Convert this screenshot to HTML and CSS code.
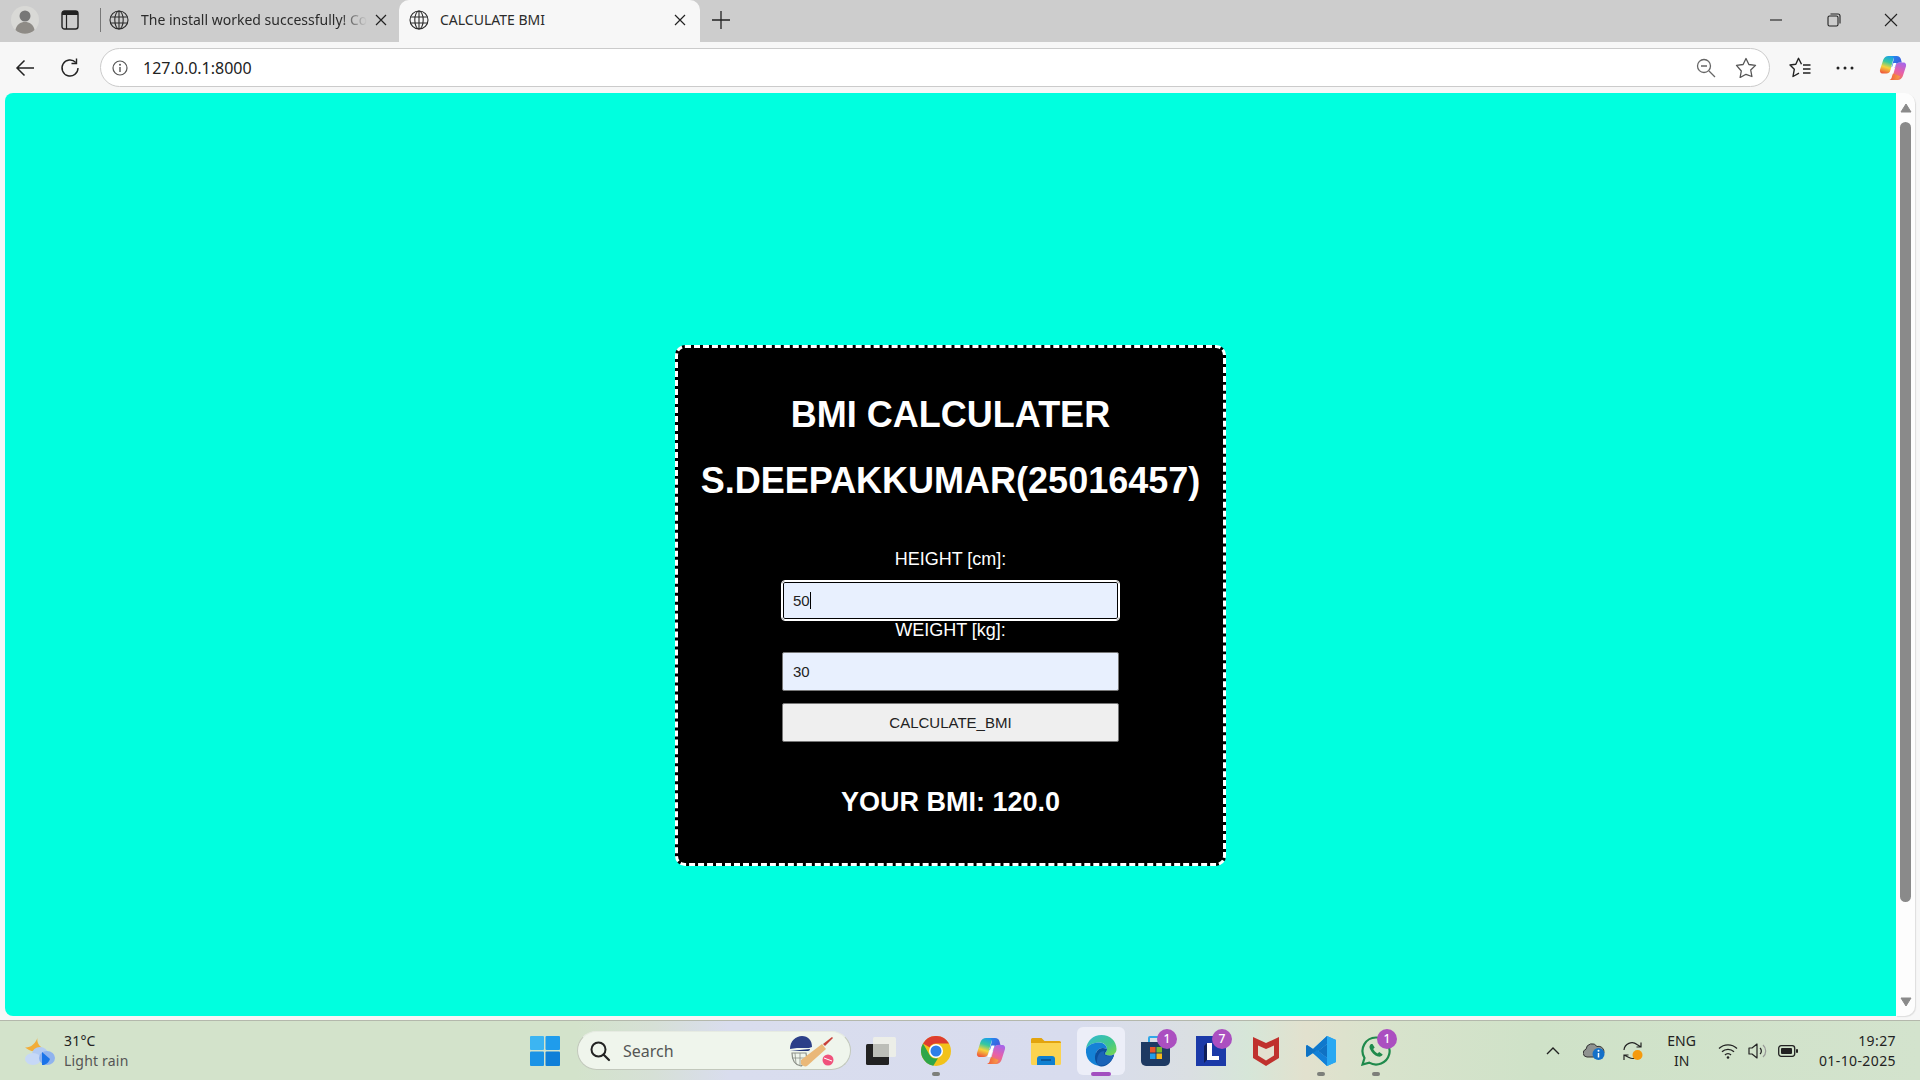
FILE: index.html
```html
<!DOCTYPE html>
<html lang="en">
<head>
<meta charset="utf-8">
<title>CALCULATE BMI</title>
<link rel="stylesheet" href="styles.css">
</head>
<body>
<svg class="defs" width="0" height="0" aria-hidden="true">
  <defs>
    <symbol id="globe" viewBox="0 0 20 20"><g fill="none" stroke="#2b2b2b" stroke-width="1.1"><circle cx="10" cy="10" r="9"/><ellipse cx="10" cy="10" rx="4.2" ry="9"/><path d="M1.5 7h17M1.5 13h17M10 1v18"/></g></symbol>
    <symbol id="close" viewBox="0 0 12 12"><path d="M1 1l10 10M11 1L1 11" fill="none" stroke="#222" stroke-width="1.2"/></symbol>
    <linearGradient id="cpL" x1=".6" y1="0" x2=".3" y2="1"><stop offset="0" stop-color="#1a9fe8"/><stop offset=".35" stop-color="#35c9a0"/><stop offset=".65" stop-color="#f5d33c"/><stop offset="1" stop-color="#ef5a3c"/></linearGradient>
    <linearGradient id="cpR" x1=".7" y1="0" x2=".3" y2="1"><stop offset="0" stop-color="#a866e8"/><stop offset=".5" stop-color="#e860a8"/><stop offset="1" stop-color="#f4823a"/></linearGradient>
    <linearGradient id="cpT" x1="0" y1="0" x2="1" y2="1"><stop offset="0" stop-color="#1f8ff0"/><stop offset=".6" stop-color="#3a62e0"/><stop offset="1" stop-color="#a866e8"/></linearGradient>
    <linearGradient id="cpB" x1="0" y1="0" x2="1" y2="0"><stop offset="0" stop-color="#ef5a3c"/><stop offset="1" stop-color="#f7a04a"/></linearGradient>
    <symbol id="copilot" viewBox="0 0 30 28">
      <path d="M10 1h9c-2 0-3 1-3.500 3L12 17c-.5 2-2 3-4 3H3.500C1.500 20 .5 18 1 16L4.500 5C5.500 2.500 7.500 1 10 1z" fill="url(#cpL)"/>
      <path d="M20 27h-9c2 0 3-1 3.500-3L18 11c.5-2 2-3 4-3h4.500c2 0 3 2 2.500 4l-3.500 11c-1 2.500-3 4-5.500 4z" fill="url(#cpR)"/>
      <path d="M14 1h5c2.500 0 4 1.500 4.500 3.500L24.500 8H22c-2 0-3.500 1-4 3l-1 3-3.500-1L15.500 6C16 3.500 15.500 2 14 1z" fill="url(#cpT)"/>
      <path d="M11 27h6c2 0 4-1 5-3l.5-1-7.500-3-1 2.500C13.500 25.500 12.500 26.500 11 27z" fill="url(#cpB)"/>
      <path d="M15.500 8.500h3.200L14.500 20h-3.200z" fill="#fff"/>
    </symbol>
  </defs>
</svg>

<div class="window">
  <header class="tabstrip">
    <div class="avatar">
      <svg width="28" height="28" viewBox="0 0 28 28"><circle cx="14" cy="14" r="14" fill="#d9d9d6"/><circle cx="14" cy="10" r="5.500" fill="#777"/><path d="M4.500 24c1-5.500 5-8 9.500-8s8.500 2.500 9.500 8a14 14 0 0 1-19 0z" fill="#8e8b86"/></svg>
    </div>
    <div class="tabs-btn">
      <svg width="18" height="20" viewBox="0 0 18 20"><rect x="1" y="1" width="16" height="18" rx="2.500" fill="none" stroke="#222" stroke-width="1.400"/><path d="M1 2.500A1.500 1.500 0 0 1 2.500 1h13A1.500 1.500 0 0 1 17 2.500V5H1z" fill="#222"/><path d="M5.500 5v14" stroke="#222" stroke-width="1.200"/></svg>
    </div>
    <div class="tab-sep"></div>
    <div class="tab tab-idle">
      <svg class="favicon" width="20" height="20"><use href="#globe"/></svg>
      <span class="tab-title tab-fade">The install worked successfully! Co</span>
      <svg class="tab-close" width="12" height="12"><use href="#close"/></svg>
    </div>
    <div class="tab tab-active">
      <svg class="favicon" width="20" height="20"><use href="#globe"/></svg>
      <span class="tab-title">CALCULATE BMI</span>
      <svg class="tab-close" width="12" height="12"><use href="#close"/></svg>
    </div>
    <div class="new-tab">
      <svg width="18" height="18" viewBox="0 0 18 18"><path d="M9 0v18M0 9h18" stroke="#222" stroke-width="1.300"/></svg>
    </div>
    <div class="win-controls">
      <svg width="14" height="14" viewBox="0 0 14 14"><path d="M1 7h12" stroke="#222" stroke-width="1.100"/></svg>
      <svg width="14" height="14" viewBox="0 0 14 14"><rect x="1" y="3" width="10" height="10" rx="1.500" fill="none" stroke="#222" stroke-width="1.100"/><path d="M3.500 1h7.500A2 2 0 0 1 13 3v7.500" fill="none" stroke="#222" stroke-width="1.100"/></svg>
      <svg width="14" height="14" viewBox="0 0 14 14"><path d="M1 1l12 12M13 1L1 13" stroke="#222" stroke-width="1.100"/></svg>
    </div>
  </header>

  <nav class="toolbar">
    <svg class="tool-back" width="20" height="18" viewBox="0 0 20 18"><path d="M19 9H2M9.500 1.500L2 9l7.500 7.500" fill="none" stroke="#222" stroke-width="1.500"/></svg>
    <svg class="tool-reload" width="20" height="20" viewBox="0 0 20 20"><path d="M15.800 4.500A8 8 0 1 0 18 10" fill="none" stroke="#222" stroke-width="1.400"/><path d="M16.500 .5v5h-5" fill="none" stroke="#222" stroke-width="1.400"/></svg>
    <div class="omnibox">
      <svg class="omni-info" width="16" height="16" viewBox="0 0 16 16"><circle cx="8" cy="8" r="7" fill="none" stroke="#555" stroke-width="1.200"/><path d="M8 7v5" stroke="#555" stroke-width="1.400"/><circle cx="8" cy="4.700" r="1" fill="#555"/></svg>
      <span class="omni-url">127.0.0.1:8000</span>
      <svg class="omni-zoom" width="20" height="20" viewBox="0 0 20 20"><circle cx="8" cy="8" r="6.500" fill="none" stroke="#666" stroke-width="1.300"/><path d="M5 8h6M13 13l6 6" stroke="#666" stroke-width="1.300"/></svg>
      <svg class="omni-star" width="22" height="21" viewBox="0 0 22 21"><path d="M11 1.500l2.900 6 6.600.9-4.800 4.600 1.200 6.500L11 17.300l-5.900 3.200 1.200-6.500L1.500 8.400l6.600-.9z" fill="none" stroke="#555" stroke-width="1.300" stroke-linejoin="round"/></svg>
    </div>
    <svg class="tool-favs" width="22" height="21" viewBox="0 0 22 21"><path d="M12.500 7.300L9.500 1.300 6.800 7.300 1 8l4.300 4.300L4 19.500l6-3.300" fill="none" stroke="#222" stroke-width="1.400" stroke-linejoin="round"/><path d="M14 8h7.500M14 12h7.500M14 16h7.500" stroke="#222" stroke-width="1.300"/></svg>
    <svg class="tool-dots" width="18" height="4" viewBox="0 0 18 4"><circle cx="2" cy="2" r="1.500" fill="#222"/><circle cx="9" cy="2" r="1.500" fill="#222"/><circle cx="16" cy="2" r="1.500" fill="#222"/></svg>
    <svg class="tool-copilot" width="28" height="26"><use href="#copilot"/></svg>
  </nav>

  <main class="viewport">
    <div class="page">
      <section class="card">
        <h1 class="card-title">BMI CALCULATER</h1>
        <h1 class="card-title card-title-2">S.DEEPAKKUMAR(25016457)</h1>
        <form class="bmi-form">
          <label class="field-label" for="h">HEIGHT [cm]:</label>
          <div class="field field-focus" id="h"><span class="field-text">50</span><span class="caret"></span></div>
          <label class="field-label" for="w">WEIGHT [kg]:</label>
          <div class="field" id="w"><span class="field-text">30</span></div>
          <div class="calc-btn">CALCULATE_BMI</div>
        </form>
        <h2 class="result">YOUR BMI: 120.0</h2>
      </section>
    </div>
    <div class="scrollbar">
      <svg width="12" height="10" viewBox="0 0 12 10"><path d="M6 1l5 8H1z" fill="#8a8a8a" stroke="#8a8a8a" stroke-linejoin="round"/></svg>
      <div class="thumb"></div>
      <svg width="12" height="10" viewBox="0 0 12 10"><path d="M6 9L1 1h10z" fill="#8a8a8a" stroke="#8a8a8a" stroke-linejoin="round"/></svg>
    </div>
  </main>

  <footer class="taskbar">
    <div class="weather">
      <svg width="30" height="30" viewBox="0 0 30 30">
        <path d="M13 0c-1.500 3.500-.5 8 2.500 10.500 1 .8 1.500 1 .5 2-3 3-8 3.500-12 1.500l-4-2.500C5 12 11 8 13 0z" fill="#f2ad3a"/>
        <ellipse cx="15" cy="18" rx="8" ry="7" fill="#b3cbf3"/>
        <ellipse cx="8" cy="23" rx="8" ry="6" fill="#c6d8f6"/>
        <ellipse cx="22" cy="22" rx="8" ry="7" fill="#8fb3ee"/>
        <path d="M17 16l8 7c-1 3-3 5-6 6h-2z" fill="#1a73e8"/>
      </svg>
      <div class="weather-text"><span class="w-temp">31°C</span><span class="w-desc">Light rain</span></div>
    </div>

    <div class="win-logo">
      <svg width="30" height="30" viewBox="0 0 30 30"><rect x="0" y="0" width="14" height="14" rx="1" fill="#3cb5f2"/><rect x="15.500" y="0" width="14.500" height="14" rx="1" fill="#1f9cec"/><rect x="0" y="15.500" width="14" height="14.500" rx="1" fill="#1a93e6"/><rect x="15.500" y="15.500" width="14.500" height="14.500" rx="1" fill="#0f7fd8"/></svg>
    </div>

    <div class="searchbox">
      <svg width="22" height="22" viewBox="0 0 22 22"><circle cx="9.500" cy="9.500" r="7" fill="none" stroke="#222" stroke-width="2"/><path d="M14.500 14.500L20 20" stroke="#222" stroke-width="2.200" stroke-linecap="round"/></svg>
      <span class="search-text">Search</span>
      <svg class="search-art" width="50" height="34" viewBox="0 0 50 34">
        <path d="M3 15c0-8 6-13 12-13s10 4 10 11l-3 1H10z" fill="#2b3f88"/>
        <path d="M3 17l20-2c0 1-1 2-2 2H5z" fill="#22337a"/>
        <path d="M5 19h14l1 8-6 5c-6-1-9-6-9-13z" fill="none" stroke="#8c9088" stroke-width="1.200"/>
        <path d="M8 19l1 11M13 19v12M5 24h15" stroke="#8c9088" stroke-width=".8"/>
        <path d="M14 26l21-16 4 5-19 17c-2 1-4 0-6-2z" fill="#eab878"/>
        <path d="M36 10l9-7 1 1-8 8z" fill="#c8413a"/>
        <circle cx="41" cy="26" r="5.500" fill="#f0527c"/>
        <path d="M37 24l8 3" stroke="#fff" stroke-width="1"/>
      </svg>
    </div>

    <div class="apps">
      <div class="app">
        <svg width="30" height="28" viewBox="0 0 30 28"><rect x="7" y="0" width="23" height="20" rx="1.500" fill="#eceee8"/><rect x="0" y="7" width="23" height="21" rx="1.500" fill="#222"/><rect x="7" y="7" width="16" height="13" fill="#bcbeb8"/></svg>
      </div>
      <div class="app app-run">
        <svg width="30" height="30" viewBox="0 0 30 30"><circle cx="15" cy="15" r="15" fill="#f2c21a"/><path d="M2 7.500A15 15 0 0 1 28 7.500H15a7.500 7.500 0 0 0-6.500 3.700z" fill="#de3d30"/><path d="M2 7.500l6.500 11.200A7.500 7.500 0 0 0 17 22.200l-4.700 7.600A15 15 0 0 1 2 7.500z" fill="#2ea64a"/><circle cx="15" cy="15" r="7" fill="#fff"/><circle cx="15" cy="15" r="5.500" fill="#2f7fe8"/></svg>
      </div>
      <div class="app">
        <svg width="30" height="28"><use href="#copilot"/></svg>
      </div>
      <div class="app">
        <svg width="30" height="28" viewBox="0 0 30 28"><path d="M0 2.500A1.500 1.500 0 0 1 1.500 1h9l3 3h15A1.500 1.500 0 0 1 30 5.500V12H0z" fill="#e3a40e"/><path d="M0 6h30v20.500a1.500 1.500 0 0 1-1.500 1.500h-27A1.500 1.500 0 0 1 0 26.500z" fill="#fbd350"/><path d="M6 28v-6a3 3 0 0 1 3-3h12a3 3 0 0 1 3 3v6z" fill="#0f7fd0"/><path d="M10 23h10" stroke="#0b4d8a" stroke-width="1.500"/></svg>
      </div>
      <div class="app app-active">
        <svg width="32" height="32" viewBox="0 0 32 32"><path d="M1 14C2 6 8 0 16.500 0 25 0 31.500 6 31.500 14c0 4-3 6.500-7 6.500-3 0-4.500-1-4.500-2 0-1 2-1.500 2-4.500 0-3.500-3-6.500-7-6.500C8 7.500 3 10 1 14z" fill="url(#edge1)"/><path d="M1 14c2-4 7-6.500 13.500-6.500 4 0 7.500 3 7.500 6.500-4-2-9-1-10.500 3-1.500 5 1 11 6.500 13.500C8 32 0 25 1 14z" fill="#1582d6"/><path d="M11.500 17c1.500-4 6.500-5 10.500-3 0 3-2 3.500-2 4.500s1.500 2 4.500 2c1.800 0 3.500-.5 4.800-1.500C28 26 22 32 16 31.500c-1 0-1.700-.4-2.500-1C9.500 27 9 21 11.500 17z" fill="#0c4f9e"/><path d="M14 19c1-2 3-3 5.500-3-1 1.500-.5 3.500 1 4.500 2 1 6 1 8.500-.5-2 6-7 10.500-13 10.500-3 0-4.500-2-4-5 .2-2.500.7-4.500 2-6.500z" fill="#1a63b8"/><defs><linearGradient id="edge1" x1="0" y1="0" x2="1" y2="1"><stop offset="0" stop-color="#2fb7d8"/><stop offset=".6" stop-color="#41c88a"/><stop offset="1" stop-color="#7fd84a"/></linearGradient></defs></svg>
        <i class="run-bar"></i>
      </div>
      <div class="app">
        <svg width="30" height="30" viewBox="0 0 30 30"><path d="M8 7V2a1 1 0 0 1 1-1h10" fill="none" stroke="#30a8e8" stroke-width="2"/><path d="M0 6h29v19a5 5 0 0 1-5 5H5a5 5 0 0 1-5-5z" fill="#1e3a63"/><rect x="9" y="11" width="5.500" height="5.500" fill="#e8562a"/><rect x="15.500" y="11" width="5.500" height="5.500" fill="#7ab82c"/><rect x="9" y="17.500" width="5.500" height="5.500" fill="#1f9ce8"/><rect x="15.500" y="17.500" width="5.500" height="5.500" fill="#f5b91a"/></svg>
        <b class="badge">1</b>
      </div>
      <div class="app">
        <svg width="30" height="30" viewBox="0 0 30 30"><rect width="30" height="30" fill="#1b3aa8"/><path d="M11 7h5v13h7v4H11z" fill="#fff"/><path d="M8 10l3-3v17l-3 3z" fill="#0f1f5a"/></svg>
        <b class="badge">7</b>
      </div>
      <div class="app">
        <svg width="26" height="30" viewBox="0 0 26 30"><path d="M0 1l13 6 13-6v21l-13 8-13-8z" fill="#c0312d"/><path d="M5 9.500l8 3.500 8-3.500v10l-8 5-8-5z" fill="#e3e0cf"/></svg>
      </div>
      <div class="app app-run">
        <svg width="30" height="30" viewBox="0 0 30 30"><path d="M21 0l9 4v22l-9 4-14-13-6 4-1-1V10l1-1 6 4z" fill="#1f9cec"/><path d="M21 8L12 15l9 7z" fill="#e0e4dc"/><path d="M21 0l9 4v22l-9 4z" fill="#29a8f2"/><path d="M21 8v14l-9-7zM7 13l-6-4-1 1v10l1 1 6-4 5 4-1-7z" fill="#0f72c4"/><path d="M21 0L7 13l4 3 10-8z" fill="#0f78cc"/><path d="M21 30L7 17l4-3 10 8z" fill="#1280d8"/></svg>
      </div>
      <div class="app app-run">
        <svg width="30" height="30" viewBox="0 0 30 30"><path d="M15 1.500a13.500 13.500 0 0 0-11.500 20.500L1.500 28.500l6.700-1.900A13.500 13.500 0 1 0 15 1.500z" fill="none" stroke="#1f8a4c" stroke-width="2.200"/><path d="M10 8c-1.500 1-2 3-1 5 1.500 3.500 4.500 6.500 8 7.500 2 .5 3.800-.2 4.700-2l-3.500-2.500-1.700 1.500c-2-1-3.400-2.500-4.300-4.400l1.500-1.700L11.500 8z" fill="#1f8a4c"/></svg>
        <b class="badge">1</b>
      </div>
    </div>

    <div class="tray">
      <svg class="t-chev" width="14" height="8" viewBox="0 0 14 8"><path d="M1 7l6-6 6 6" fill="none" stroke="#222" stroke-width="1.400"/></svg>
      <svg class="t-cloud" width="22" height="20" viewBox="0 0 22 20"><path d="M4 16a4 4 0 0 1-1-7.800A6 6 0 0 1 14 5.500 5 5 0 0 1 17 16z" fill="#8f9290" stroke="#333" stroke-width="1"/><circle cx="15.500" cy="13" r="6" fill="#1470c8"/><path d="M15.500 12v4.500" stroke="#fff" stroke-width="1.500"/><circle cx="15.500" cy="9.800" r="1" fill="#fff"/></svg>
      <svg class="t-sync" width="22" height="20" viewBox="0 0 22 20"><path d="M2 9a8 8 0 0 1 13-5.500L19 6M19 1.500V6h-4.500" fill="none" stroke="#222" stroke-width="1.200"/><path d="M18 13a8 8 0 0 1-11 3.500L2 14M2 19v-5h4.500" fill="none" stroke="#222" stroke-width="1.200"/><circle cx="15.500" cy="14" r="5" fill="#f59a0e"/></svg>
      <div class="t-lang"><span>ENG</span><span>IN</span></div>
      <svg class="t-wifi" width="20" height="16" viewBox="0 0 20 16"><path d="M1 5.500a13 13 0 0 1 18 0M4 8.800a8.500 8.500 0 0 1 12 0M7 12a4 4 0 0 1 6 0" fill="none" stroke="#222" stroke-width="1.300"/><circle cx="10" cy="14.500" r="1.300" fill="#222"/></svg>
      <svg class="t-vol" width="20" height="18" viewBox="0 0 20 18"><path d="M1 6h3l5-4v14l-5-4H1z" fill="none" stroke="#222" stroke-width="1.200" stroke-linejoin="round"/><path d="M12 6a4 4 0 0 1 0 6" fill="none" stroke="#222" stroke-width="1.200"/><path d="M15 3a8 8 0 0 1 0 12" fill="none" stroke="#999" stroke-width="1.200"/></svg>
      <svg class="t-bat" width="20" height="12" viewBox="0 0 20 12"><rect x=".7" y=".7" width="16" height="10.600" rx="2.500" fill="none" stroke="#222" stroke-width="1.300"/><rect x="3" y="3" width="11" height="6" rx="1" fill="#222"/><rect x="18" y="4" width="2" height="4" rx="1" fill="#222"/></svg>
      <div class="t-clock"><span>19:27</span><span>01-10-2025</span></div>
    </div>
  </footer>
</div>
</body>
</html>
```
FILE: styles.css
```css
* { box-sizing: border-box; }
html, body { margin: 0; height: 100%; overflow: hidden; }
body { font-family: "Noto Sans", "Open Sans", sans-serif; color: #222; }
.defs { position: absolute; }
.window { width: 1920px; height: 1080px; display: flex; flex-direction: column; background: #f7f7f7; }

/* tab strip */
.tabstrip { height: 42px; background: #cdcdcd; display: flex; align-items: center; padding: 0 0 2px 11px; flex: none; }
.avatar { width: 28px; height: 28px; display: flex; }
.tabs-btn { margin-left: 22px; display: flex; }
.tab-sep { width: 1px; height: 24px; background: #777; margin-left: 21px; }
.tab { height: 42px; margin-bottom: -2px; padding-bottom: 2px; display: flex; align-items: center; flex: none; font-size: 14px; color: #2b2b2b; }
.favicon { flex: none; }
.tab-title { white-space: nowrap; overflow: hidden; flex: none; padding-bottom: 2px; }
.tab-fade { -webkit-mask-image: linear-gradient(90deg, #000 88%, transparent 100%); mask-image: linear-gradient(90deg, #000 88%, transparent 100%); }
.tab-close { flex: none; }
.tab-idle { width: 298px; padding-left: 8px; }
.tab-idle .tab-title { width: 226px; margin-left: 12px; }
.tab-idle .tab-close { margin-left: 8px; }
.tab-active { background: #f7f7f7; width: 301px; border-radius: 10px 10px 0 0; padding-left: 10px; }
.tab-active .tab-title { width: 230px; margin-left: 11px; }
.tab-active .tab-close { margin-left: 4px; }
.new-tab { margin-left: 12px; display: flex; }
.win-controls { margin-left: auto; display: flex; gap: 43px; padding-right: 22px; }
.win-controls svg:first-child { position: relative; left: -1px; }

/* toolbar */
.toolbar { height: 51px; display: flex; align-items: center; padding-left: 15px; flex: none; background: #f7f7f7; }
.tool-back { flex: none; }
.tool-reload { margin-left: 25px; flex: none; }
.omnibox { margin-left: 20px; width: 1670px; height: 39px; background: #fff; border: 1px solid #cbcbcb; border-radius: 20px; display: flex; align-items: center; padding-left: 11px; flex: none; }
.omni-url { margin-left: 15px; font-size: 16px; color: #222; }
.omni-zoom { margin-left: auto; }
.omni-star { margin-left: 19px; margin-right: 12px; }
.tool-favs { margin-left: 19px; flex: none; }
.tool-dots { margin-left: 25px; flex: none; }
.tool-copilot { margin-left: 25px; flex: none; }

/* viewport */
.viewport { height: 927px; display: flex; flex: none; padding-left: 5px; background: #f7f7f7; padding-bottom: 4px; }
.page { width: 1891px; background: #00ffdf; border-radius: 8px 0 0 8px; display: flex; justify-content: center; align-items: flex-start; padding-top: 252px; }
.scrollbar { width: 19px; background: #fdfdfd; border-radius: 0 10px 10px 0; box-shadow: 1px 1px 1px #ddd; display: flex; flex-direction: column; align-items: center; padding: 10px 0 9px; justify-content: space-between; }
.thumb { width: 11px; flex: 1; margin: 9px 0 95px; background: #8a8a8a; border-radius: 6px; }

/* card */
.card { width: 551px; height: 521px; background: #000; border: 3px dashed #fff; border-radius: 10px; color: #fff; font-family: "Liberation Sans", Arial, sans-serif; text-align: center; padding-top: 46px; }
.card-title { font-size: 36px; line-height: 42px; margin: 0; font-weight: 700; }
.card-title-2 { margin-top: 24px; }
.bmi-form { display: flex; flex-direction: column; align-items: center; margin-top: 47px; }
.field-label { font-size: 18px; line-height: 20px; height: 20px; display: block; }
.field { width: 337px; height: 39px; margin-top: 12px; background: #e8f0fe; border: 1px solid #767676; border-radius: 2px; color: #222; font-size: 15px; display: flex; align-items: center; padding-left: 10px; text-align: left; }
.field-focus { border: 1px solid #fff; border-radius: 3px; outline: 1px solid #fff; box-shadow: inset 0 0 0 1px #000; }
.caret { width: 1px; height: 17px; background: #000; }
.calc-btn { width: 337px; height: 39px; margin-top: 12px; background: #efefef; border: 1px solid #767676; border-radius: 2px; color: #222; font-size: 15px; display: flex; align-items: center; justify-content: center; }
.result { font-size: 27px; line-height: 32px; margin: 44px 0 0; font-weight: 700; }

/* taskbar */
.taskbar { height: 60px; flex: none; display: flex; align-items: center; padding-left: 25px; border-top: 1px solid #b4b8ac;
  background: linear-gradient(90deg, #d3e3cb 0%, #d3e3cb 30%, #d6e0d6 34%, #d9ddee 38%, #d8dcee 56%, #dadfe2 62%, #d6e6d8 65%, #e2e1ce 68%, #d8e3cc 72%, #cfe2c8 80%, #d3e3cd 100%); }
.weather { display: flex; align-items: center; gap: 9px; width: 206px; flex: none; }
.weather-text { display: flex; flex-direction: column; font-size: 14px; line-height: 20px; letter-spacing: .2px; }
.w-desc { color: #555; }
.win-logo { width: 30px; height: 30px; margin-left: 299px; flex: none; }
.searchbox { margin-left: 17px; width: 274px; height: 39px; flex: none; border-radius: 20px; background: #eff5ec; border: 1px solid #c2c8bc; border-top-color: #e6ebe2; display: flex; align-items: center; padding-left: 11px; }
.search-text { margin-left: 12px; font-size: 16px; color: #555; }
.search-art { margin-left: auto; margin-right: 13px; }
.apps { display: flex; margin-left: 6px; flex: none; }
.app { width: 48px; height: 48px; margin-right: 7px; display: flex; align-items: center; justify-content: center; position: relative; border-radius: 6px; }
.app-active { background: #eceef8; }
.app-run::after { content: ""; position: absolute; left: 20px; bottom: -1px; width: 8px; height: 4px; border-radius: 2px; background: #7d7f7a; }
.run-bar { position: absolute; left: 14px; bottom: -1px; width: 20px; height: 4px; border-radius: 2px; background: #a24fc0; }
.badge { position: absolute; top: 2px; right: 3px; width: 20px; height: 20px; border-radius: 50%; background: #ab4fc0; color: #fff; font-size: 12px; font-weight: 500; display: flex; align-items: center; justify-content: center; }
.tray { margin-left: auto; display: flex; align-items: center; padding-right: 24px; flex: none; font-size: 14px; }
.t-lang, .t-clock { display: flex; flex-direction: column; line-height: 20px; }
.t-lang { align-items: center; margin-left: 23px; }
.t-clock { align-items: flex-end; margin-left: 21px; letter-spacing: .4px; }
.t-cloud { margin-left: 23px; }
.t-sync { margin-left: 17px; }
.t-wifi { margin-left: 22px; }
.t-vol { margin-left: 10px; }
.t-bat { margin-left: 10px; }
```
